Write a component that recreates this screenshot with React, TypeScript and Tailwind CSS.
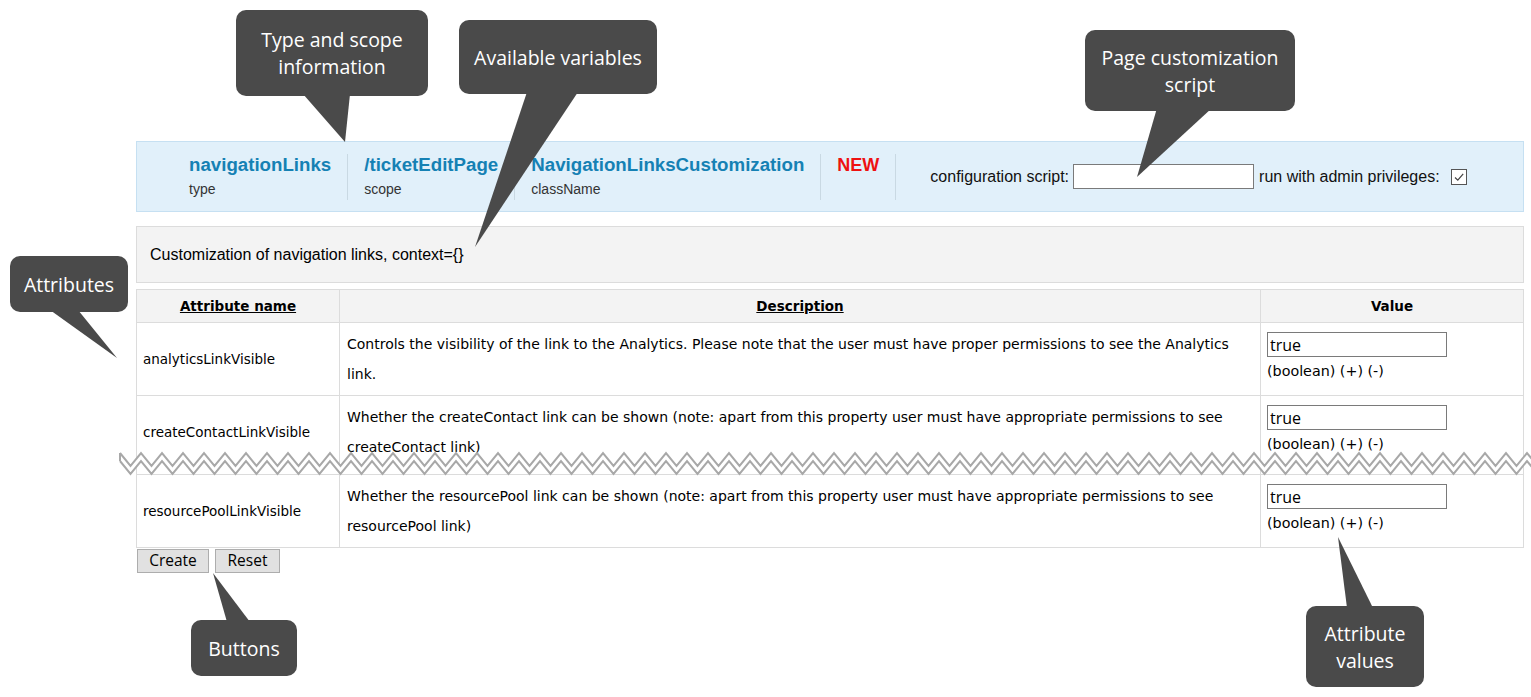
import React from 'react';

const rows = [
  {
    name: 'analyticsLinkVisible',
    desc: 'Controls the visibility of the link to the Analytics. Please note that the user must have proper permissions to see the Analytics link.',
    torn: false,
  },
  {
    name: 'createContactLinkVisible',
    desc: 'Whether the createContact link can be shown (note: apart from this property user must have appropriate permissions to see createContact link)',
    torn: true,
  },
  {
    name: 'resourcePoolLinkVisible',
    desc: 'Whether the resourcePool link can be shown (note: apart from this property user must have appropriate permissions to see resourcePool link)',
    torn: false,
  },
];

const HeaderItem: React.FC<{ label: string; sub?: string; red?: boolean }> = ({ label, sub, red }) => (
  <div className="h-[46px] px-[16px] border-r border-[#c9d9e3] flex flex-col">
    <span className={`leading-[22px] font-bold ${red ? 'text-[18px] text-[#ee1111]' : 'text-[18.7px] text-[#1581b4]'}`}>{label}</span>
    {sub && <span className="mt-[5px] text-[14px] leading-[16px] text-[#333]">{sub}</span>}
  </div>
);

// zigzag "torn page" points
const zig = (y0: number, y1: number) => {
  const pts: string[] = [];
  for (let i = 0, x = 120; x <= 1545; i++, x += 10.5) {
    pts.push(`${x},${i % 2 === 0 ? y0 : y1}`);
  }
  return pts;
};

const TornEdge: React.FC = () => {
  const top = zig(453, 466);
  const bottom = zig(461, 474);
  const poly = [...top, ...bottom.slice().reverse()].join(' ');
  return (
    <svg className="absolute left-0 top-0 pointer-events-none" width="1531" height="697">
      <polygon points={poly} fill="#ffffff" />
      <polyline points={top.join(' ')} fill="none" stroke="#a8a8a8" strokeWidth="2" />
      <polyline points={bottom.join(' ')} fill="none" stroke="#a8a8a8" strokeWidth="2" />
      <line x1="120" y1="453" x2="120" y2="461" stroke="#a8a8a8" strokeWidth="2" />
    </svg>
  );
};

const Pointers: React.FC = () => (
  <svg className="absolute left-0 top-0 pointer-events-none" width="1531" height="697">
    <g fill="#4a4a4a">
      <polygon points="303,94 350,94 345,142" />
      <polygon points="527,92 578,92 475,247" />
      <polygon points="1157,108 1212,108 1137,177" />
      <polygon points="50,310 78,310 117,358" />
      <polygon points="227,622 250,622 213,573" />
      <polygon points="1347,608 1373,608 1338,537" />
    </g>
  </svg>
);

const boxCls =
  'absolute rounded-[10px] bg-[#4a4a4a] text-white flex flex-col items-center justify-center text-center text-[19.5px] leading-[27px] font-["Open_Sans",sans-serif]';

export default function App() {
  return (
    <div className="relative w-[1531px] h-[697px] overflow-hidden bg-white font-['Liberation_Sans',Arial,sans-serif] text-black">
      <div className="pt-[141px] pl-[136px] w-[1524px]">
        {/* header info bar */}
        <div className="h-[71px] bg-[#e1f0fa] border border-[#c6e0f2] flex items-center pl-[36px]">
          <HeaderItem label="navigationLinks" sub="type" />
          <HeaderItem label="/ticketEditPage" sub="scope" />
          <HeaderItem label="NavigationLinksCustomization" sub="className" />
          <HeaderItem label="NEW" red />
          <div className="ml-[34px] flex items-center text-[16px] text-[#111]">
            <span>configuration script:</span>
            <input className="ml-[4px] w-[181px] h-[25px] bg-white border border-[#7a7a7a] outline-none" />
            <span className="ml-[5px]">run with admin privileges:</span>
            <span className="ml-[11px] w-[16px] h-[16px] border border-[#555] bg-white flex items-center justify-center">
              <svg width="12" height="12" viewBox="0 0 12 12">
                <path d="M2 6.5 L4.8 9.2 L10.2 2.8" fill="none" stroke="#444" strokeWidth="1.2" />
              </svg>
            </span>
          </div>
        </div>

        {/* description */}
        <div className="mt-[14px] h-[57px] bg-[#f3f3f3] border border-[#dcdcdc] flex items-center pl-[13px] text-[16px]">
          Customization of navigation links, context={'{}'}
        </div>

        {/* attributes table */}
        <table className="mt-[6px] w-full border-collapse font-['DejaVu_Sans',Verdana,sans-serif] text-[14px]">
          <thead>
            <tr className="h-[33px] bg-[#f3f3f3]">
              <th className="w-[203px] border border-[#dcdcdc] font-bold underline text-[13.5px]">Attribute name</th>
              <th className="border border-[#dcdcdc] font-bold underline text-[13.5px]">Description</th>
              <th className="w-[263px] border border-[#dcdcdc] font-bold text-[13.5px]">Value</th>
            </tr>
          </thead>
          <tbody>
            {rows.map((r) => (
              <tr key={r.name} className={r.torn ? 'h-[79px]' : 'h-[73px]'}>
                <td className={`border border-[#dcdcdc] pl-[6px] align-middle text-[13.5px] ${r.torn ? 'pb-[6px]' : ''}`}>
                  {r.name}
                </td>
                <td className={`border border-[#dcdcdc] pl-[7px] pr-[20px] align-middle leading-[30px] ${r.torn ? 'pb-[6px]' : ''}`}>
                  {r.desc}
                </td>
                <td className="border border-[#dcdcdc] pl-[6px] pt-[9px] align-top">
                  <input
                    readOnly
                    value="true"
                    className="block w-[180px] h-[25px] border border-[#7a7a7a] px-[2px] text-[16px] font-['Open_Sans',sans-serif] outline-none"
                  />
                  <div className="mt-[4px] leading-[20px] text-[14.3px]">(boolean) (+) (-)</div>
                </td>
              </tr>
            ))}
          </tbody>
        </table>

        {/* buttons */}
        <div className="mt-[1px] ml-[1px] flex gap-[6px] font-['Open_Sans',sans-serif] text-[15.5px]">
          <button className="w-[72px] h-[24px] bg-[#e1e1e1] border border-[#adadad] leading-none">Create</button>
          <button className="w-[65px] h-[24px] bg-[#e1e1e1] border border-[#adadad] leading-none">Reset</button>
        </div>
      </div>

      <TornEdge />
      <Pointers />

      {/* callouts */}
      <div className={`${boxCls} left-[236px] top-[10px] w-[192px] h-[86px]`}>
        <span>Type and scope</span>
        <span>information</span>
      </div>
      <div className={`${boxCls} left-[459px] top-[20px] w-[198px] h-[74px]`}>
        <span>Available variables</span>
      </div>
      <div className={`${boxCls} left-[1085px] top-[30px] w-[210px] h-[81px]`}>
        <span>Page customization</span>
        <span>script</span>
      </div>
      <div className={`${boxCls} left-[10px] top-[256px] w-[118px] h-[56px]`}>
        <span>Attributes</span>
      </div>
      <div className={`${boxCls} left-[191px] top-[620px] w-[106px] h-[56px]`}>
        <span>Buttons</span>
      </div>
      <div className={`${boxCls} left-[1306px] top-[606px] w-[118px] h-[81px]`}>
        <span>Attribute</span>
        <span>values</span>
      </div>
    </div>
  );
}
